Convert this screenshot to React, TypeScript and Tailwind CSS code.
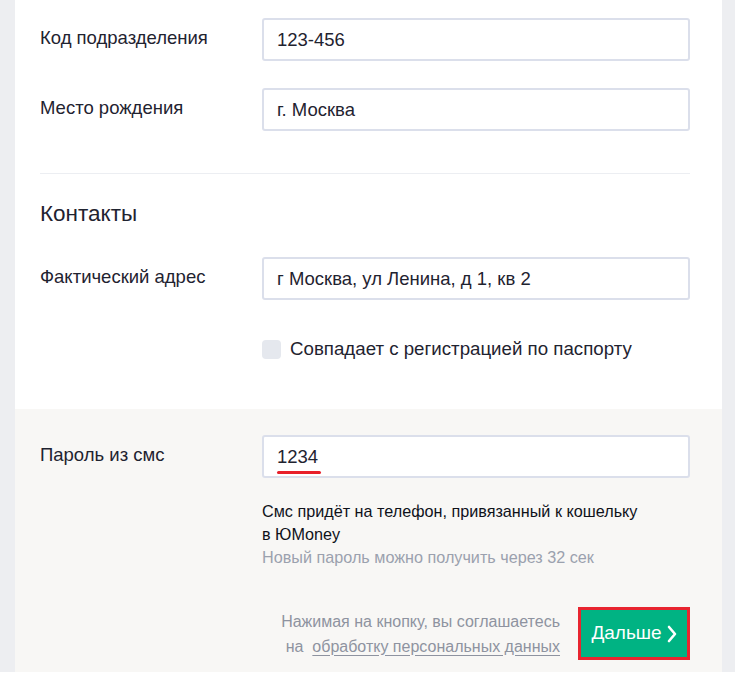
import React from 'react';

const font = { fontFamily: '"Liberation Sans", Arial, sans-serif' };

function Field({ label, value, underline = false }: { label: string; value: string; underline?: boolean }) {
  return (
    <div className="flex">
      <div className="w-[222px] shrink-0 pt-[10px] text-[18.5px] leading-[20px] text-[#1f2330]">{label}</div>
      <div className="flex h-[43px] flex-1 items-center rounded-[3px] border-2 border-[#dbdfeb] bg-white px-[13px] text-[18.5px] text-[#1f2330]">
        {underline ? (
          <span className="relative">
            {value}
            <span className="absolute -bottom-[4px] left-0 right-[-3px] h-[3px] rounded-full bg-[#e8202a]" />
          </span>
        ) : (
          value
        )}
      </div>
    </div>
  );
}

export default function App() {
  return (
    <div className="h-[683px] w-[735px] bg-white" style={font}>
      <div className="flex h-[672px] bg-[#edeef1] pl-[15px] pr-[13px]">
        <div className="flex flex-1 flex-col bg-white">
          <div className="px-[25px] pr-[32px] pt-[18px]">
            <div className="flex flex-col gap-[27px]">
              <Field label="Код подразделения" value="123-456" />
              <Field label="Место рождения" value="г. Москва" />
            </div>
            <div className="mt-[42px] h-px bg-[#eceef2]" />
            <h2 className="mt-[28px] text-[22.5px] leading-[24px] text-[#1f2330]">Контакты</h2>
            <div className="mt-[31px]">
              <Field label="Фактический адрес" value="г Москва, ул Ленина, д 1, кв 2" />
            </div>
            <label className="ml-[222px] mt-[40px] flex h-[19px] items-center gap-[9px] text-[18.7px] text-[#1f2330]">
              <span className="h-[19px] w-[19px] shrink-0 rounded-[4px] bg-[#e5e8ee]" />
              Совпадает с регистрацией по паспорту
            </label>
            <div className="h-[50px]" />
          </div>
          <div className="flex-1 bg-[#f8f7f5] px-[25px] pr-[32px] pt-[26px]">
            <Field label="Пароль из смс" value="1234" underline />
            <div className="ml-[222px] mt-[22px] text-[16.2px] leading-[23px]">
              <p className="text-[#0f121a]">Смс придёт на телефон, привязанный к кошельку</p>
              <p className="text-[#0f121a]">в ЮMoney</p>
              <p className="text-[#9ba1ae]">Новый пароль можно получить через 32 сек</p>
            </div>
            <div className="mt-[38px] flex items-center justify-end gap-[18px]">
              <div className="text-right text-[16px] leading-[25px] text-[#8e93a0]">
                <p>Нажимая на кнопку, вы соглашаетесь</p>
                <p>
                  на&nbsp;&nbsp;<span className="underline underline-offset-[3px]">обработку персональных данных</span>
                </p>
              </div>
              <button
                type="button"
                className="flex h-[53px] w-[112px] shrink-0 items-center justify-center gap-[5px] border-[3px] border-[#e8252f] bg-[#00b383] text-[19px] text-white"
              >
                Дальше
                <svg width="10" height="18" viewBox="0 0 10 18" fill="none" aria-hidden>
                  <path d="M2 2l6 7-6 7" stroke="white" strokeWidth="2.6" strokeLinecap="round" strokeLinejoin="round" />
                </svg>
              </button>
            </div>
          </div>
        </div>
      </div>
    </div>
  );
}
